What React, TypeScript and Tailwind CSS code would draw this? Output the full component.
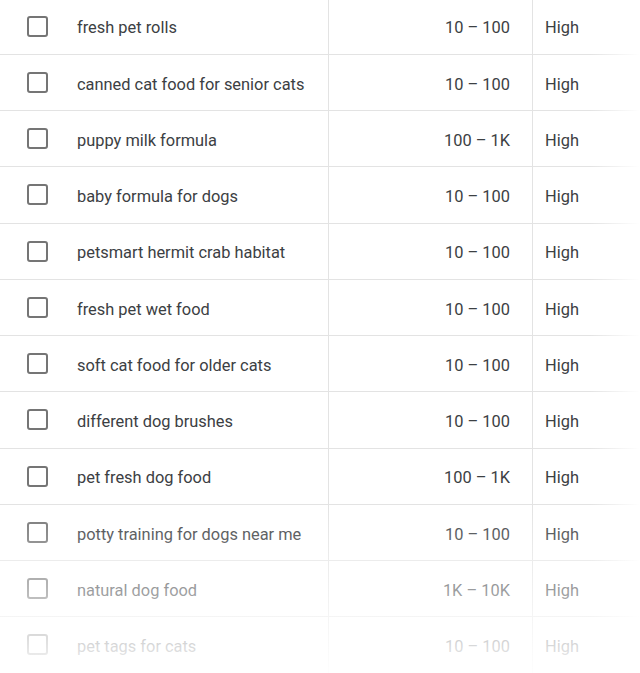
import React from "react";

const rows: [string, string][] = [
  ["fresh pet rolls", "10 – 100"],
  ["canned cat food for senior cats", "10 – 100"],
  ["puppy milk formula", "100 – 1K"],
  ["baby formula for dogs", "10 – 100"],
  ["petsmart hermit crab habitat", "10 – 100"],
  ["fresh pet wet food", "10 – 100"],
  ["soft cat food for older cats", "10 – 100"],
  ["different dog brushes", "10 – 100"],
  ["pet fresh dog food", "100 – 1K"],
  ["potty training for dogs near me", "10 – 100"],
  ["natural dog food", "1K – 10K"],
  ["pet tags for cats", "10 – 100"],
];

export default function App() {
  return (
    <div
      className="relative h-[673px] w-[640px] overflow-hidden bg-white text-[#3c4043]"
      style={{ fontFamily: "Roboto, 'Liberation Sans', sans-serif" }}
    >
      <div className="-mt-[1.5px] flex flex-col">
        {rows.map(([kw, vol], i) => (
          <div key={i} className="flex h-[56.25px] shrink-0 border-b border-[#e3e3e3] text-[16.4px]">
            <div className="flex w-[329px] items-center border-r border-[#e3e3e3] pl-[27px]">
              <div className="h-[21px] w-[21px] rounded-[3px] border-[2.5px] border-[#757575]" />
              <span className="ml-[29px] pt-[5px]">{kw}</span>
            </div>
            <div className="flex w-[204px] items-center justify-end border-r border-[#e3e3e3] pr-[22px] pt-[5px]">
              {vol}
            </div>
            <div className="flex flex-1 items-center pl-[12px] pt-[5px]">High</div>
          </div>
        ))}
      </div>
      <div className="pointer-events-none absolute inset-y-0 right-0 w-[50px] bg-gradient-to-r from-white/0 to-white" />
      <div className="pointer-events-none absolute inset-x-0 bottom-0 h-[170px] bg-gradient-to-b from-white/0 to-white/95" />
    </div>
  );
}
